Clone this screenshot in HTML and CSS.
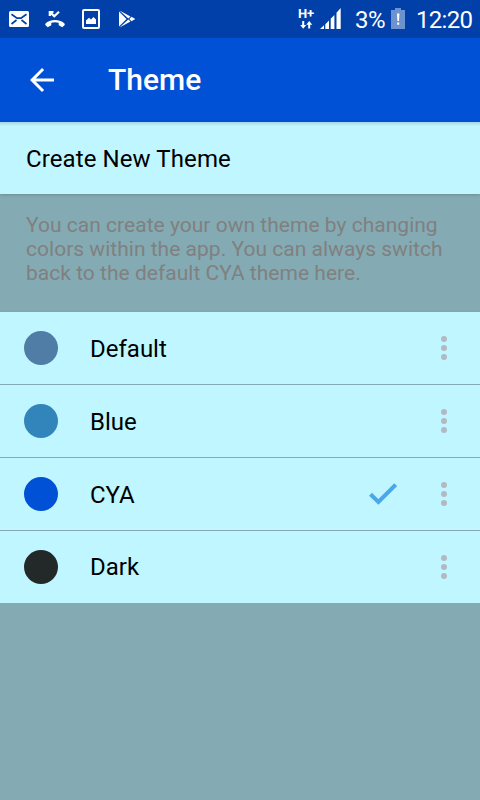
FILE: index.html
```html
<!DOCTYPE html>
<html lang="en">
<head>
    <meta charset="UTF-8">
    <meta name="viewport" content="width=device-width, initial-scale=1.0">
    <title>Theme</title>
    <link rel="stylesheet" href="styles.css">
</head>
<body>

    <!-- Status bar -->
    <div class="status-bar">
        <div class="notifications">
            <svg width="20" height="16" viewBox="0 0 20 16">
                <rect width="20" height="16" rx="1.5" fill="#fff"/>
                <path d="M2.500 3.200L8 7.200H12L17.500 3.200M2.500 13L7.500 9M17.500 13L12.500 9" fill="none" stroke="#0040a8" stroke-width="1.700"/>
            </svg>
            <svg width="20" height="18" viewBox="0 0 20 18">
                <path d="M0.300 13.800C5 8.800 15 8.800 19.700 13.800V15L17.300 17.300L13.700 15.300V12.700Q10 11.700 6.300 12.700V15.300L2.700 17.300L0.300 15Z" fill="#fff"/>
                <path d="M4.800 6V2H8.500M5.200 2.400L9.300 6.300L14 1.700" fill="none" stroke="#fff" stroke-width="2.200"/>
            </svg>
            <svg width="18" height="20" viewBox="0 0 18 20">
                <rect x="1" y="1" width="16" height="18" rx="1" fill="none" stroke="#fff" stroke-width="2"/>
                <path d="M4 15V11.500L7 8.700L9 10.500L11.500 8L14 10.500V15Z" fill="#fff"/>
            </svg>
            <svg width="18" height="18" viewBox="0 0 18 18">
                <path d="M1 1.500V16.500L8.500 9Z" fill="#fff"/>
                <path d="M1.500 0.500L12.500 6.500L10.300 8.400ZM1.500 17.500L12.500 11.500L10.300 9.600ZM11.300 9L13.500 6.800L17.300 9L13.500 11.200Z" fill="#fff"/>
            </svg>
        </div>
        <div class="system-info">
            <div class="network">
                <span class="network-type">H+</span>
                <svg width="13" height="8" viewBox="0 0 13 8">
                    <path d="M2.200 0H4.200V4H6.300L3.200 7.800L0.200 4H2.200ZM8.200 7.500H10.200V3.800H12.300L9.200 0L6.200 3.800H8.200Z" fill="#fff"/>
                </svg>
            </div>
            <svg class="signal" width="21" height="21" viewBox="0 0 21 21">
                <path d="M0 21L4 17.300V21ZM5.300 16.200L9 12.500V21H5.300ZM10.700 10.800L14.400 7V21H10.700ZM16.500 4.700L20.700 0V21H16.500Z" fill="#fff"/>
            </svg>
            <span class="percent">3%</span>
            <svg class="battery" width="14" height="21" viewBox="0 0 14 21">
                <path d="M4 0H10V2H14V21H0V2H4Z" fill="#6c92d0"/>
                <path d="M6 5.500H8.400L8 13H6.400ZM6.200 14.500H8.200V16.700H6.200Z" fill="#fff"/>
            </svg>
            <span class="clock">12:20</span>
        </div>
    </div>

    <header class="app-bar">
        <svg class="back" width="36" height="36" viewBox="0 0 24 24">
            <path d="M20 11H7.830l5.590-5.590L12 4l-8 8 8 8 1.410-1.410L7.830 13H20v-2z" fill="#fff"/>
        </svg>
        <h1>Theme</h1>
    </header>

    <main>
        <div class="create">Create New Theme</div>

        <p class="note">You can create your own theme by changing<br>colors within the app. You can always switch<br>back to the default CYA theme here.</p>

        <ul class="theme-list">
            <li class="theme">
                <span class="swatch swatch-default"></span>
                <span class="name">Default</span>
                <span class="menu"><i></i><i></i><i></i></span>
            </li>
            <li class="theme">
                <span class="swatch swatch-blue"></span>
                <span class="name">Blue</span>
                <span class="menu"><i></i><i></i><i></i></span>
            </li>
            <li class="theme">
                <span class="swatch swatch-cya"></span>
                <span class="name">CYA</span>
                <svg class="check" width="28" height="22" viewBox="0 0 28 22">
                    <path d="M1.500 11.300L9.400 19L26.700 1.700" fill="none" stroke="#4ca6ec" stroke-width="4"/>
                </svg>
                <span class="menu"><i></i><i></i><i></i></span>
            </li>
            <li class="theme">
                <span class="swatch swatch-dark"></span>
                <span class="name">Dark</span>
                <span class="menu"><i></i><i></i><i></i></span>
            </li>
        </ul>
    </main>

</body>
</html>
```
FILE: styles.css
```css
* {
    box-sizing: border-box;
}

body {
    font-family: Roboto, sans-serif;
    background-color: #84abb3;
    color: #000;
    margin: 0;
    padding: 0;
}

svg {
    display: block;
    flex-shrink: 0;
}

/* Status bar */
.status-bar {
    height: 38px;
    background-color: #0040a8;
    color: white;
    display: flex;
    justify-content: space-between;
    align-items: center;
    padding: 0 8px 0 9px;
}

.notifications {
    display: flex;
    align-items: center;
    gap: 16px;
}

.notifications svg:nth-child(3) {
    margin-left: 1px;
}

.notifications svg:last-child {
    margin-left: 2px;
}

.system-info {
    display: flex;
    align-items: flex-start;
    height: 38px;
    font-size: 24px;
    line-height: 40px;
}

.network {
    display: flex;
    flex-direction: column;
    align-items: center;
    gap: 2px;
    width: 16px;
    margin-top: 8px;
}

.network-type {
    font-size: 13px;
    font-weight: 700;
    line-height: 11px;
}

.signal {
    margin: 8px 0 0 6px;
}

.percent {
    width: 30px;
    margin-left: 14px;
    letter-spacing: -0.5px;
}

.battery {
    margin: 8px 11px 0 6px;
}

.clock {
    width: 56px;
    letter-spacing: -0.7px;
}

/* App bar */
.app-bar {
    height: 84px;
    background-color: #0051d6;
    color: white;
    display: flex;
    align-items: center;
    padding-left: 24px;
}

.app-bar h1 {
    margin: 0 0 2px 48px;
    font-size: 30px;
    font-weight: 500;
}

.create {
    height: 72px;
    padding-left: 26px;
    background: linear-gradient(#a6d6e0, #bff6ff 4px);
    box-shadow: 0 1px 3px rgba(0, 0, 0, 0.18);
    font-size: 24px;
    line-height: 74px;
    letter-spacing: 0.1px;
}

.note {
    height: 118px;
    margin: 0;
    padding: 19px 26px 0;
    color: #808080;
    font-size: 21px;
    line-height: 24px;
    letter-spacing: 0.02px;
    white-space: nowrap;
}

/* Theme list */
.theme-list {
    list-style: none;
    margin: 0;
    padding: 0;
    background-color: #bff6ff;
    box-shadow: 0 1px 3px rgba(0, 0, 0, 0.18);
}

.theme {
    display: flex;
    align-items: center;
    height: 73px;
    padding: 0 33px 0 24px;
    border-bottom: 1px solid #84abb3;
}

.theme:last-child {
    height: 72px;
    border-bottom: none;
}

.swatch {
    width: 34px;
    height: 34px;
    border-radius: 50%;
}

.swatch-default {
    background-color: #507da5;
}

.swatch-blue {
    background-color: #3285bb;
}

.swatch-cya {
    background-color: #0051d6;
}

.swatch-dark {
    background-color: #232829;
}

.name {
    flex: 1;
    margin-left: 32px;
    padding-top: 2px;
    font-size: 24px;
}

.theme:last-child .name {
    padding-top: 0;
}

.check {
    margin-right: 44px;
}

.menu {
    display: flex;
    flex-direction: column;
    gap: 3px;
}

.menu i {
    width: 6px;
    height: 6px;
    border-radius: 50%;
    background-color: #b3b9c2;
}
```
